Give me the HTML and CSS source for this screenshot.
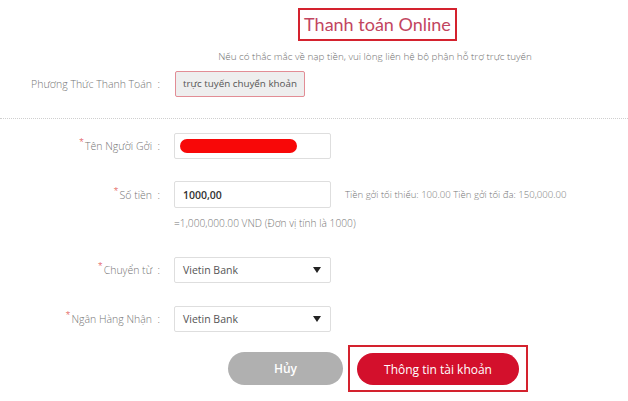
FILE: index.html
```html
<!DOCTYPE html>
<html lang="vi">
<head>
<meta charset="utf-8">
<link rel="stylesheet" href="styles.css">
</head>
<body>
<div class="page">
  <header class="head">
    <h1 class="title">Thanh toán Online</h1>
    <p class="sub">Nếu có thắc mắc về nạp tiền, vui lòng liên hệ bộ phận hỗ trợ trực tuyến</p>
  </header>
  <div class="row row-method">
    <div class="label">Phương Thức Thanh Toán &nbsp;:</div>
    <div class="method">trực tuyến chuyển khoản</div>
  </div>
  <div class="divider"></div>
  <div class="row row-name">
    <div class="label"><span class="req">*</span>Tên Người Gởi &nbsp;:</div>
    <div class="input"><span class="redact"></span></div>
  </div>
  <div class="row row-amount">
    <div class="label"><span class="req">*</span>Số tiền &nbsp;:</div>
    <div class="input amount">1000,00</div>
    <div class="hint">Tiền gởi tối thiểu: 100.00 Tiền gởi tối đa: 150,000.00</div>
  </div>
  <div class="row row-note">
    <div class="label"></div>
    <div class="note">=1,000,000.00 VND (Đơn vị tính là 1000)</div>
  </div>
  <div class="row row-from">
    <div class="label"><span class="req">*</span>Chuyển từ &nbsp;:</div>
    <div class="input select">Vietin Bank<span class="caret"></span></div>
  </div>
  <div class="row row-to">
    <div class="label"><span class="req">*</span>Ngân Hàng Nhận &nbsp;:</div>
    <div class="input select">Vietin Bank<span class="caret"></span></div>
  </div>
  <div class="actions">
    <button class="btn cancel">Hủy</button>
    <div class="highlight"><button class="btn primary">Thông tin tài khoản</button></div>
  </div>
</div>
</body>
</html>
```

FILE: styles.css
```css
* { box-sizing: border-box; }
html, body { margin: 0; padding: 0; background: #fff; }
body {
  font-family: "Open Sans", "Noto Sans", "Liberation Sans", sans-serif;
  font-size: 11px;
  color: #666;
  width: 628px;
  height: 401px;
  overflow: hidden;
}
.page { padding-top: 8px; }
.head {
  padding-left: 130px;
  text-align: center;
}
.title {
  display: inline-block;
  margin: 0 0 0 -3px;
  width: 159px;
  height: 33px;
  padding: 0;
  border: 2px solid #d4222e;
  font-family: "Lato", "Open Sans", sans-serif;
  font-weight: 400;
  font-size: 18px;
  line-height: 29px;
  color: #c24560;
  white-space: nowrap;
}
.sub {
  margin: 8px 0 0 -8px;
  font-size: 9.9px;
  line-height: 14px;
  color: #707070;
  font-weight: 300;
}
.row {
  display: grid;
  grid-template-columns: 160px 157px auto;
  column-gap: 14px;
  align-items: center;
}
.label {
  text-align: right;
  font-size: 10.5px;
  color: #757575;
  font-weight: 300;
  white-space: nowrap;
}
.req {
  color: #d33;
  font-size: 9px;
  position: relative;
  top: -5px;
  margin-right: 1px;
}
.row-method { margin-top: 8px; grid-template-columns: 160px auto; column-gap: 15px; }
.method {
  justify-self: start;
  width: 130px;
  height: 26px;
  line-height: 24px;
  padding: 0;
  text-align: center;
  background: #eeeeee;
  border: 1px solid #e28d95;
  border-radius: 2px;
  font-size: 9.8px;
  color: #555;
  white-space: nowrap;
}
.divider {
  margin-top: 21px;
  border-top: 1px dotted #cfcfcf;
}
.input {
  height: 26px;
  border: 1px solid #dedede;
  border-radius: 2px;
  background: #fff;
  display: flex;
  align-items: center;
  padding: 0 8px;
  color: #555;
  font-size: 10.5px;
}
.row-name { margin-top: 14px; }
.redact {
  display: block;
  width: 117px;
  height: 14px;
  margin-left: -3px;
  border-radius: 7px;
  background: #f80808;
}
.row-amount { margin-top: 22px; }
.row-amount .input { height: 27px; }
.amount { color: #333; font-weight: 600; }
.hint { color: #777; font-weight: 300; font-size: 9.6px; white-space: nowrap; }
.row-note { margin-top: 8px; }
.note { grid-column: 2 / 4; color: #777; font-weight: 300; font-size: 10.2px; white-space: nowrap; }
.row-from { margin-top: 27px; }
.row-to { margin-top: 23px; }
.select { justify-content: space-between; padding-right: 9px; }
.caret {
  width: 0; height: 0;
  border-left: 4px solid transparent;
  border-right: 4px solid transparent;
  border-top: 6px solid #222;
}
.actions {
  margin-top: 13px;
  display: flex;
  align-items: center;
  padding-left: 228px;
}
.btn {
  border: none;
  font-family: "Open Sans", "Noto Sans", "Liberation Sans", sans-serif;
  font-size: 12px;
  color: #fff;
  border-radius: 17px;
  height: 33px;
}
.cancel { width: 115px; background: #b0b0b0; font-weight: 600; }
.highlight {
  margin-left: 5px;
  border: 2px solid #d4222e;
  padding: 6px 7px 5px 7px;
  width: 180px;
  height: 47px;
}
.primary { width: 162px; height: 32px; background: #d3102c; font-weight: 500; }
```
